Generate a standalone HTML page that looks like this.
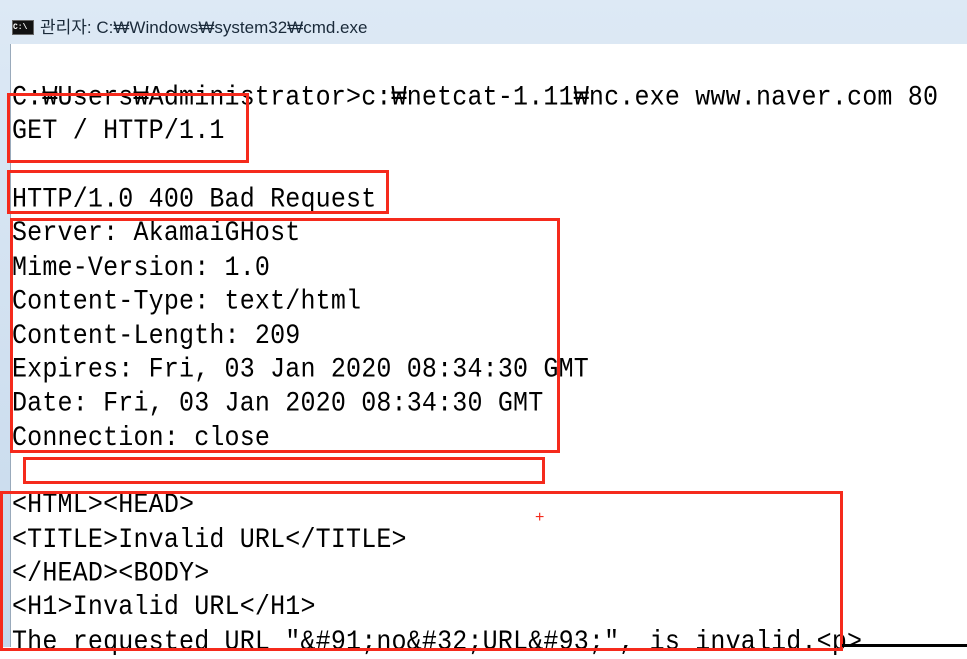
<!DOCTYPE html>
<html><head><meta charset="utf-8"><style>
html,body{margin:0;padding:0;width:967px;height:647px;overflow:hidden;background:#fff;}
#frame{position:absolute;left:0;top:0;width:967px;height:647px;background:linear-gradient(#dde9f5,#c6d9ec);}
#title{position:absolute;left:40px;top:13px;font:17px "Liberation Sans","Noto Sans CJK KR",sans-serif;color:#1a2a3a;}
#icon{position:absolute;left:12px;top:20px;width:20px;height:13px;background:#111;border:1px solid #666;color:#fff;font:bold 8px "Liberation Mono",monospace;line-height:13px;}
#content{position:absolute;left:10px;top:44px;width:957px;height:603px;background:#fff;border-left:1px solid #9ab;}
pre{position:absolute;left:12px;top:81px;margin:0;font:25px/30.36px "Liberation Mono","DejaVu Sans Mono","Noto Sans CJK KR",monospace;color:#000;letter-spacing:0.18px;transform:scaleY(1.12);transform-origin:0 0;}
.b{position:absolute;border:3px solid #f52a1c;box-sizing:border-box;}
#bot{position:absolute;left:842px;top:644px;width:125px;height:3px;background:#000;}
</style></head><body>
<div id="frame"></div>
<div id="icon">C:\</div>
<div id="title">관리자: C:₩Windows₩system32₩cmd.exe</div>
<div id="content"></div>
<pre>C:₩Users₩Administrator&gt;c:₩netcat-1.11₩nc.exe www.naver.com 80
GET / HTTP/1.1

HTTP/1.0 400 Bad Request
Server: AkamaiGHost
Mime-Version: 1.0
Content-Type: text/html
Content-Length: 209
Expires: Fri, 03 Jan 2020 08:34:30 GMT
Date: Fri, 03 Jan 2020 08:34:30 GMT
Connection: close

&lt;HTML&gt;&lt;HEAD&gt;
&lt;TITLE&gt;Invalid URL&lt;/TITLE&gt;
&lt;/HEAD&gt;&lt;BODY&gt;
&lt;H1&gt;Invalid URL&lt;/H1&gt;
The requested URL "&amp;#91;no&amp;#32;URL&amp;#93;", is invalid.&lt;p&gt;</pre>
<div class="b" style="left:7px;top:93px;width:242px;height:70px"></div>
<div class="b" style="left:7px;top:170px;width:382px;height:44px"></div>
<div class="b" style="left:10px;top:218px;width:550px;height:235px"></div>
<div class="b" style="left:23px;top:457px;width:522px;height:27px"></div>
<div class="b" style="left:0px;top:491px;width:843px;height:160px"></div>
<div style="position:absolute;left:535px;top:509px;color:#f52a1c;font:16px 'Liberation Sans',sans-serif;">+</div>
<div id="bot"></div>
</body></html>
